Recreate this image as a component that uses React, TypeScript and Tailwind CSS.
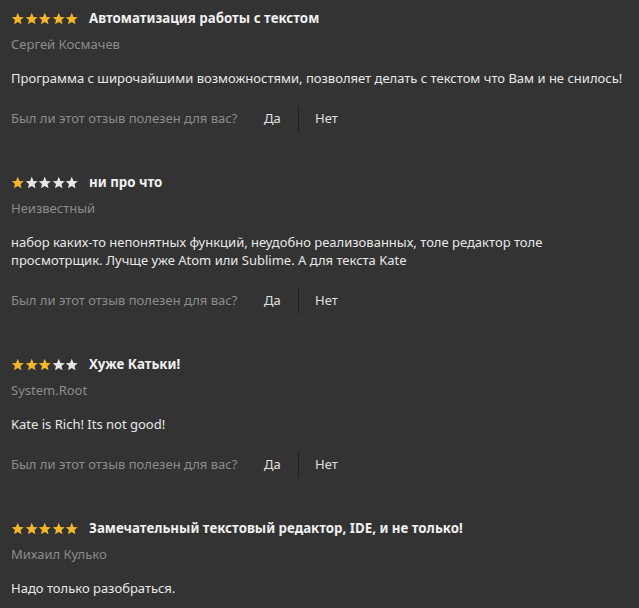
import React from 'react'

type Review = {
  rating: number
  title: string
  author: string
  body: string
  helpful: boolean
}

const reviews: Review[] = [
  {
    rating: 5,
    title: 'Автоматизация работы с текстом',
    author: 'Сергей Космачев',
    body: 'Программа с широчайшими возможностями, позволяет делать с текстом что Вам и не снилось!',
    helpful: true,
  },
  {
    rating: 1,
    title: 'ни про что',
    author: 'Неизвестный',
    body: 'набор каких-то непонятных функций, неудобно реализованных, толе редактор толе просмотрщик. Лучще уже Atom или Sublime. А для текста Kate',
    helpful: true,
  },
  {
    rating: 3,
    title: 'Хуже Катьки!',
    author: 'System.Root',
    body: 'Kate is Rich! Its not good!',
    helpful: true,
  },
  {
    rating: 5,
    title: 'Замечательный текстовый редактор, IDE, и не только!',
    author: 'Михаил Кулько',
    body: 'Надо только разобраться.',
    helpful: false,
  },
]

function Star({ filled }: { filled: boolean }) {
  return (
    <svg width="13.5" height="13.5" viewBox="0 0 24 24" className="shrink-0">
      <path
        d="M12 1.5l3.1 7.2 7.6.6-5.8 5 1.8 7.6L12 17.8l-6.7 4.1 1.8-7.6-5.8-5 7.6-.6z"
        fill={filled ? '#f3b52a' : '#e6e6e6'}
      />
    </svg>
  )
}

function Stars({ rating }: { rating: number }) {
  return (
    <div className="flex items-center">
      {[1, 2, 3, 4, 5].map((i) => (
        <Star key={i} filled={i <= rating} />
      ))}
    </div>
  )
}

function ReviewItem({ review }: { review: Review }) {
  return (
    <div className="flex flex-col">
      {/* title row */}
      <div className="flex items-center gap-[10.5px] h-[20px]">
        <Stars rating={review.rating} />
        <span className="font-bold text-[13.3px] text-[#f0f0f0]">{review.title}</span>
      </div>
      {/* author */}
      <div className="mt-[5px] h-[20px] leading-[20px] text-[13px] text-[#8c8c8c]">{review.author}</div>
      {/* text */}
      <p className="mt-[15px] text-[13px] leading-[18px] text-[#e8e8e8] pr-[8px]">{review.body}</p>
      {review.helpful && (
        <div className="mt-[19px] flex items-center h-[26px] text-[13px]">
          <span className="text-[#8c8c8c] w-[253px]">Был ли этот отзыв полезен для вас?</span>
          <span className="text-[#e0e0e0] w-[34px]">Да</span>
          <div className="w-px h-[26px] bg-[#1f1f1f] mr-[16px]" />
          <span className="text-[#e0e0e0]">Нет</span>
        </div>
      )}
    </div>
  )
}

export default function App() {
  return (
    <div
      className="w-[639px] h-[608px] overflow-hidden bg-[#333333] pl-[11px] pt-[9px]"
      style={{ fontFamily: '"Noto Sans", "Open Sans", sans-serif' }}
    >
      <div className="flex flex-col gap-[41px]">
        {reviews.map((r, i) => (
          <ReviewItem key={i} review={r} />
        ))}
      </div>
    </div>
  )
}
